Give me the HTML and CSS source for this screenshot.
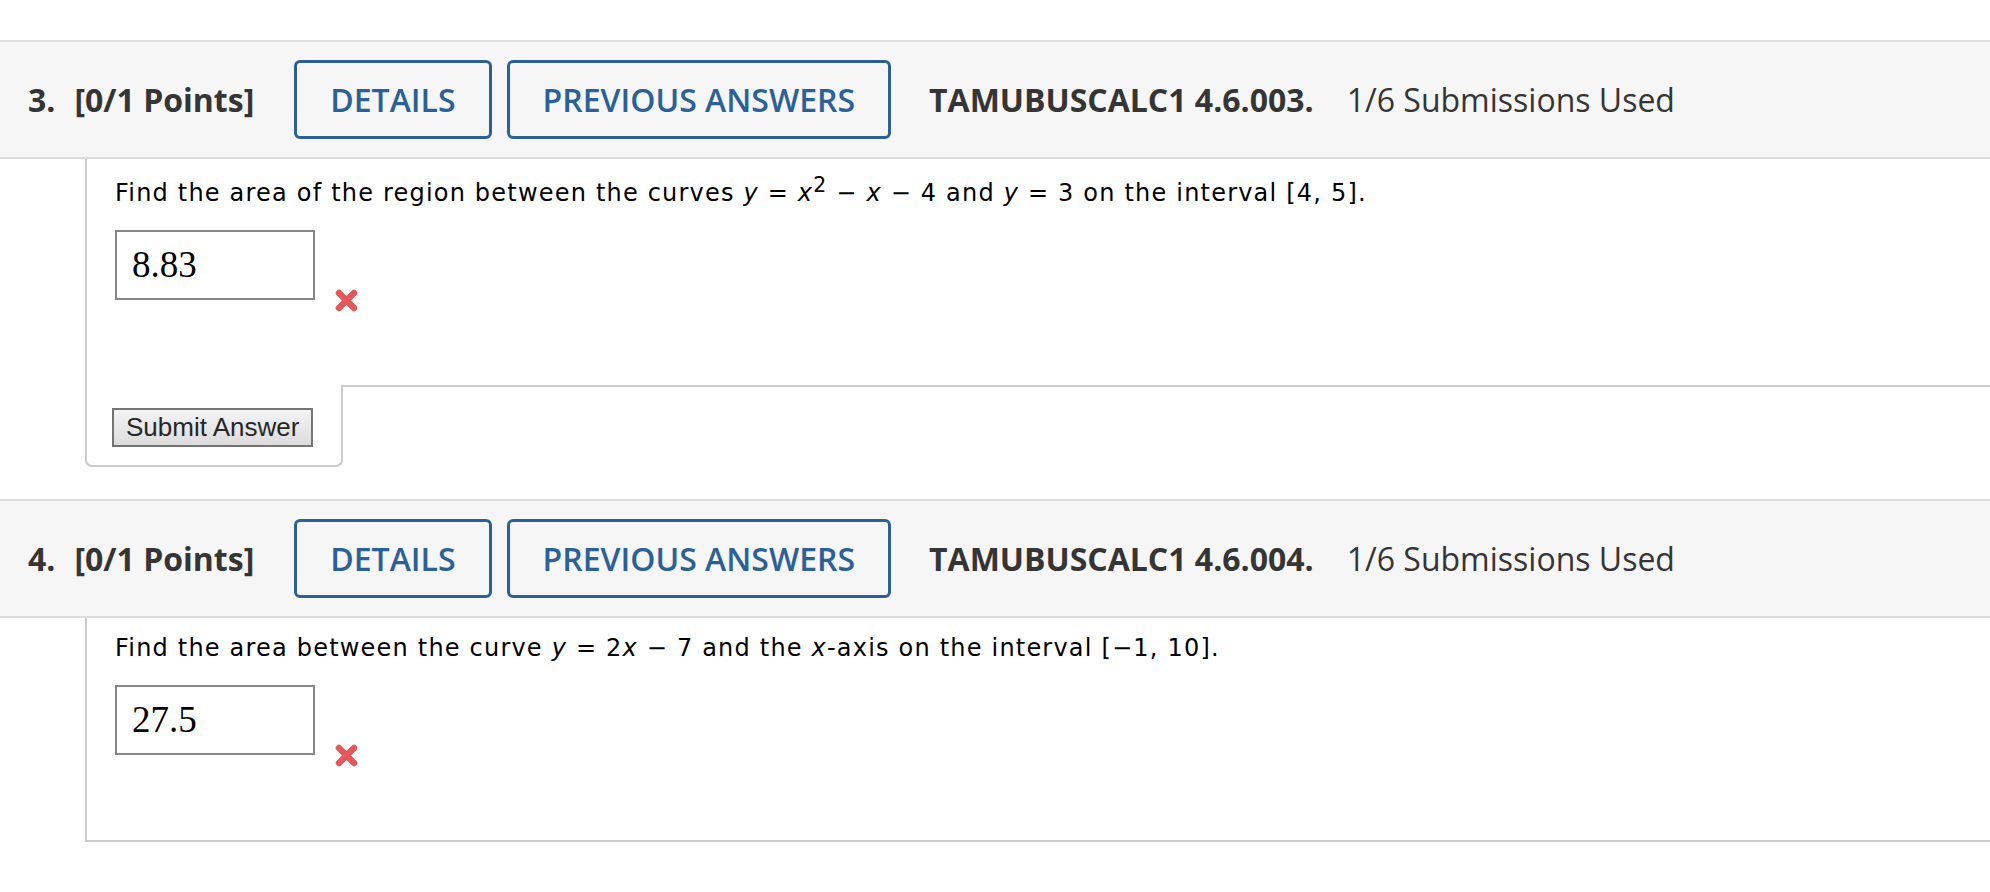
FILE: index.html
```html
<html>

<head>
    <link rel="stylesheet" href="styles.css">
</head>

<body>
    <div class="page">

        <!-- question 3 -->
        <div class="question">
            <div class="qHead">
                <span class="qNum">3.</span>
                <span class="qPoints">[0/1 Points]</span>
                <button class="headBtn detailsBtn">DETAILS</button>
                <button class="headBtn">PREVIOUS ANSWERS</button>
                <span class="qCode">TAMUBUSCALC1 4.6.003.</span>
                <span class="qSubs">1/6 Submissions Used</span>
            </div>
            <div class="qBody">
                <p class="qText">Find the area of the region between the curves <i>y</i> = <i>x</i><sup>2</sup> &minus; <i>x</i> &minus; 4 and <i>y</i> = 3 on the interval [4, 5].</p>
                <div class="answerRow">
                    <span class="answerBox">8.83</span>
                    <svg class="wrongMark" width="27" height="25" viewBox="0 0 27 25">
                        <path d="M6 5 L21 20 M21 5 L6 20" />
                    </svg>
                </div>
            </div>
            <div class="submitTab">
                <button class="submitBtn">Submit Answer</button>
            </div>
        </div>

        <!-- question 4 -->
        <div class="question">
            <div class="qHead">
                <span class="qNum">4.</span>
                <span class="qPoints">[0/1 Points]</span>
                <button class="headBtn detailsBtn">DETAILS</button>
                <button class="headBtn">PREVIOUS ANSWERS</button>
                <span class="qCode">TAMUBUSCALC1 4.6.004.</span>
                <span class="qSubs">1/6 Submissions Used</span>
            </div>
            <div class="qBody">
                <p class="qText">Find the area between the curve <i>y</i> = 2<i>x</i> &minus; 7 and the <i>x</i>-axis on the interval [&minus;1, 10].</p>
                <div class="answerRow">
                    <span class="answerBox">27.5</span>
                    <svg class="wrongMark" width="27" height="25" viewBox="0 0 27 25">
                        <path d="M6 5 L21 20 M21 5 L6 20" />
                    </svg>
                </div>
            </div>
        </div>

    </div>
</body>

</html>
```

FILE: styles.css
```css
    body {
        margin: 0;
        background: #fff;
    }

    .page {
        padding-top: 40px;
    }

    .question {
        margin-bottom: 32px;
    }

    /* grey bar with number, points and buttons */
    .qHead {
        display: flex;
        align-items: center;
        height: 119px;
        box-sizing: border-box;
        padding-left: 28px;
        background: #f6f6f6;
        border-top: 2px solid #dddddd;
        border-bottom: 2px solid #dddddd;
        font-family: "Open Sans", sans-serif;
        font-size: 32px;
        color: #353535;
    }

    .qNum {
        font-weight: bold;
        margin-right: 19px;
    }

    .qPoints {
        font-weight: bold;
        margin-right: 40px;
    }

    .headBtn {
        height: 79px;
        box-sizing: border-box;
        padding: 0 33px;
        border: 3px solid #2b6196;
        border-radius: 6px;
        background: transparent;
        color: #2b6196;
        font-family: "Open Sans", sans-serif;
        font-size: 32px;
        font-weight: 600;
        margin-right: 38px;
    }

    .detailsBtn {
        margin-right: 15px;
    }

    .qCode {
        font-weight: bold;
        margin-right: 33px;
    }

    .qSubs {
        font-weight: normal;
    }

    /* question text + answer */
    .qBody {
        margin-left: 85px;
        border-left: 2px solid #cccccc;
        border-bottom: 2px solid #cccccc;
        padding: 16px 0 85px 28px;
    }

    .qText {
        margin: 0 0 23px 0;
        font-family: "DejaVu Sans", Verdana, sans-serif;
        font-size: 24px;
        letter-spacing: 1.2px;
        color: #000;
    }

    .qText sup {
        font-size: 0.85em;
        line-height: 1;
        vertical-align: 9px;
    }

    .answerRow {
        display: flex;
        align-items: flex-end;
    }

    .answerBox {
        width: 200px;
        height: 70px;
        box-sizing: border-box;
        border: 2px solid #868686;
        padding-left: 15px;
        line-height: 66px;
        font-family: "Liberation Serif", serif;
        font-size: 37px;
        color: #000;
    }

    .wrongMark {
        margin-left: 18px;
        margin-bottom: -13px;
        filter: blur(0.5px);
    }

    .wrongMark path {
        stroke: #e4585b;
        stroke-width: 6.5;
        stroke-linecap: round;
        fill: none;
    }

    /* tab under the question holding the submit button */
    .submitTab {
        width: 258px;
        box-sizing: border-box;
        margin-left: 85px;
        margin-top: -2px;
        background: #fff;
        border: 2px solid #cccccc;
        border-top: none;
        border-radius: 0 0 7px 7px;
        padding: 23px 0 18px 25px;
        position: relative;
    }

    .submitBtn {
        height: 39px;
        width: 201px;
        box-sizing: border-box;
        padding: 0 0 0 12px;
        text-align: left;
        border: 2px solid #747474;
        background: linear-gradient(#f4f4f4, #dcdcdc);
        font-family: "Liberation Sans", Arial, sans-serif;
        font-size: 26px;
        color: #262626;
    }
```
